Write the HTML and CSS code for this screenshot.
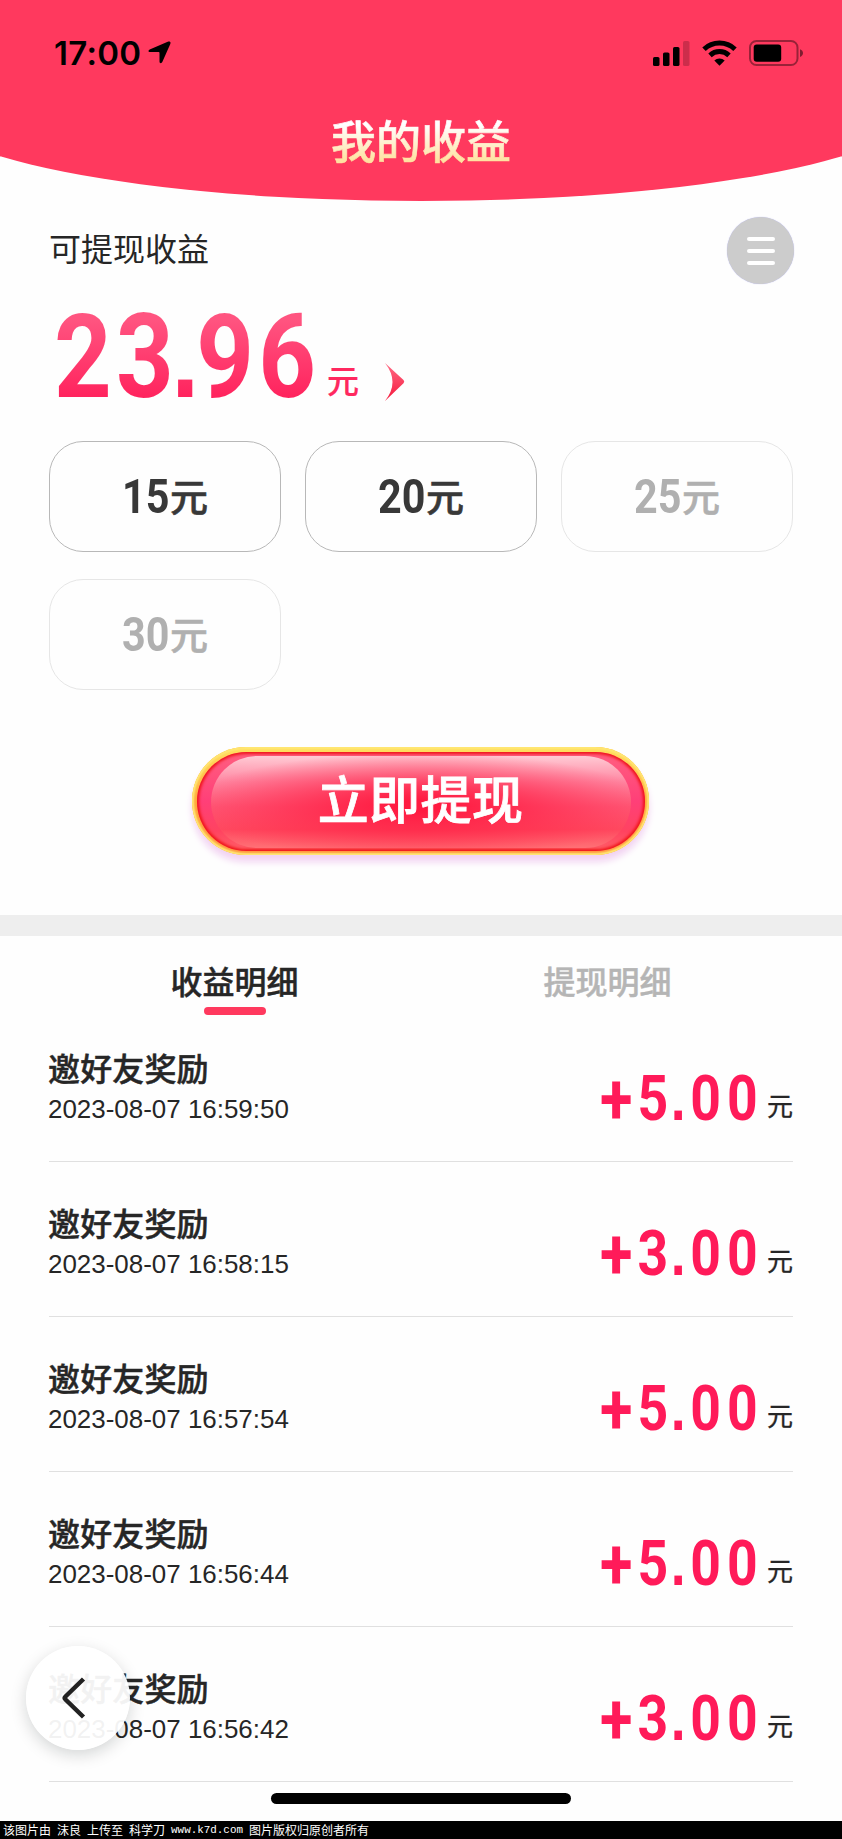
FILE: index.html
```html
<!DOCTYPE html>
<html lang="zh-CN">
<head>
<meta charset="utf-8">
<title>我的收益</title>
<link rel="stylesheet" href="styles.css">
</head>
<body>
<div class="page">
  <header class="hero">
    <div class="status">
      <div class="status-left">
        <span class="clock">17:00</span>
        <svg class="loc" width="23" height="23" viewBox="0 0 23 23"><path d="M20.3.5 1.7 8.5C-.2 9.4.3 11 2 11.100h8.700q.8 0 .8.8v8.600c0 1.900 2 2.300 2.800.5L22.300 2.900C23 1.200 22 0 20.300.5Z"/></svg>
      </div>
      <div class="status-right">
        <svg width="37" height="25" viewBox="0 0 37 25"><rect x="0" y="16" width="6.500" height="9" rx="1.600"/><rect x="10" y="11.500" width="6.500" height="13.500" rx="1.600"/><rect x="20" y="6" width="6.500" height="19" rx="1.600"/><rect x="30" y="0" width="6.500" height="25" rx="1.600" opacity=".2"/></svg>
        <svg class="wifi" width="35" height="26" viewBox="0 0 35 26"><g fill="none" stroke="#000" stroke-width="5"><path d="M2 9.200a22.500 22.500 0 0 1 31 0"/><path d="M8 15.300a14 14 0 0 1 19 0"/></g><path d="M17.500 25.800 12.300 20.500a7.600 7.600 0 0 1 10.400 0Z"/></svg>
        <svg class="battery" width="55" height="26" viewBox="0 0 55 26"><rect x="1" y="1" width="47.500" height="24" rx="6.500" fill="none" stroke="#000" stroke-width="2" opacity=".4"/><rect x="4.700" y="4.500" width="27.500" height="17.300" rx="3"/><path d="M51 9.300c4 1.500 4 6.100 0 7.600Z" opacity=".5"/></svg>
      </div>
    </div>
    <h1 class="title">我的收益</h1>
  </header>

  <section class="wallet">
    <div class="wallet-head">
      <span class="wallet-label">可提现收益</span>
      <span class="menu"><i></i><i></i><i></i></span>
    </div>
    <div class="balance">
      <span class="balance-num">23<i class="dot">.</i>96</span>
      <span class="balance-unit">元</span>
      <svg class="arrow" width="20" height="38" viewBox="0 0 20 38"><defs><linearGradient id="ag" x1="0" y1="0" x2="0" y2="1"><stop offset="0" stop-color="#ff6b85"/><stop offset="1" stop-color="#f5183c"/></linearGradient></defs><path d="M0 0 18.500 17q1.500 1.600 0 3.200L0 38Q15 19 0 0Z" fill="url(#ag)"/></svg>
    </div>
    <div class="options">
      <div class="option"><b>15</b><span>元</span></div>
      <div class="option"><b>20</b><span>元</span></div>
      <div class="option off"><b>25</b><span>元</span></div>
      <div class="option off"><b>30</b><span>元</span></div>
    </div>
    <div class="cta"><div class="cta-body"><div class="cta-gloss"></div><span>立即提现</span></div></div>
  </section>

  <section class="detail">
    <nav class="tabs">
      <span class="tab active">收益明细</span>
      <span class="tab">提现明细</span>
    </nav>
    <ul class="list">
      <li class="row"><div class="info"><b>邀好友奖励</b><time>2023-08-07 16:59:50</time></div><div class="amount"><strong><i class="plus">+</i>5<i class="dot">.</i>00</strong><span>元</span></div></li>
      <li class="row"><div class="info"><b>邀好友奖励</b><time>2023-08-07 16:58:15</time></div><div class="amount"><strong><i class="plus">+</i>3<i class="dot">.</i>00</strong><span>元</span></div></li>
      <li class="row"><div class="info"><b>邀好友奖励</b><time>2023-08-07 16:57:54</time></div><div class="amount"><strong><i class="plus">+</i>5<i class="dot">.</i>00</strong><span>元</span></div></li>
      <li class="row"><div class="info"><b>邀好友奖励</b><time>2023-08-07 16:56:44</time></div><div class="amount"><strong><i class="plus">+</i>5<i class="dot">.</i>00</strong><span>元</span></div></li>
      <li class="row"><div class="info"><b>邀好友奖励</b><time>2023-08-07 16:56:42</time></div><div class="amount"><strong><i class="plus">+</i>3<i class="dot">.</i>00</strong><span>元</span></div></li>
    </ul>
    <div class="home"></div>
  </section>

  <footer class="credit"><span>该图片由</span><span>沫良</span><span>上传至</span><span>科学刀</span><span class="site">www.k7d.com</span><span>图片版权归原创者所有</span></footer>

  <div class="back"><svg width="24" height="42" viewBox="0 0 24 42"><path d="M21.500 2 3.500 19.500q-1.500 1.500 0 3L21.500 40" fill="none" stroke="#222" stroke-width="4.500"/></svg></div>
</div>
</body>
</html>
```
FILE: styles.css
```css
* { box-sizing: border-box; }
body {
  margin: 0;
  font-family: "Liberation Sans", "Noto Sans CJK SC", sans-serif;
  color: #262626;
  background: #fefefe;
}
i { font-style: normal; }
.page {
  position: relative;
  display: flex;
  flex-direction: column;
  width: 842px;
  height: 1839px;
  overflow: hidden;
}

/* header */
.hero {
  position: relative;
  height: 201px;
  overflow: hidden;
}
.hero::before {
  content: "";
  position: absolute;
  top: 0;
  left: -10%;
  width: 120%;
  height: 100%;
  background: #ff395e;
  border-radius: 0 0 50% 50% / 0 0 100px 100px;
}
.status {
  position: relative;
  display: flex;
  justify-content: space-between;
  height: 110px;
  padding: 40px 38px 0 54px;
}
.status-left, .status-right { display: flex; align-items: flex-start; }
.clock {
  font: 600 33px/27px Inter, sans-serif;
  letter-spacing: .3px;
  width: 94px;
  color: #000;
}
.loc { margin-top: 1px; }
.status-right { padding-top: 1px; }
.wifi { margin: -1px 12px 0 12px; }
.battery { margin-top: -1px; }
.title {
  position: relative;
  width: max-content;
  margin: 0 auto;
  font: 500 45px/60px "Noto Sans CJK SC", sans-serif;
  background: linear-gradient(#fff 25%, #ffe2a0 85%);
  -webkit-background-clip: text;
  background-clip: text;
  color: transparent;
  -webkit-text-stroke: .7px transparent;
}

/* wallet */
.wallet {
  height: 714px;
  padding: 15px 49px 0;
}
.wallet-head {
  display: flex;
  justify-content: space-between;
  align-items: center;
  height: 68px;
}
.wallet-label { font: 400 32px/40px "Noto Sans CJK SC", sans-serif; padding-bottom: 6px; }
.menu {
  display: flex;
  flex-direction: column;
  align-items: center;
  justify-content: center;
  gap: 8px;
  width: 67px;
  height: 67px;
  margin: 1px -1px 0 0;
  border-radius: 50%;
  background: #ccc;
  box-shadow: 0 0 1px #aaaaf0;
}
.menu i { width: 28px; height: 4px; border-radius: 2px; background: #fff; }
.balance { display: flex; height: 157px; }
.balance-num {
  width: 325px;
  height: 142px;
  margin: 0 -46px 0 5px;
  padding-top: 14px;
  font: 700 117px/118px Roboto, sans-serif;
  letter-spacing: 5px;
  transform: scaleX(.86);
  transform-origin: 0 0;
  white-space: nowrap;
  background: linear-gradient(#ff5480 25%, #ff215c 82%);
  -webkit-background-clip: text;
  background-clip: text;
  color: transparent;
}
.dot {
  display: inline-block;
  font-family: "Liberation Sans", sans-serif;
  line-height: 1;
}
.balance-num .dot { width: 21px; text-indent: -8px; letter-spacing: 0; }
.balance-unit {
  margin: 75px 0 0 -6px;
  font: 500 32px/40px "Noto Sans CJK SC", sans-serif;
  color: #ff285f;
  -webkit-text-stroke: .2px;
}
.arrow { margin: 79px 0 0 26px; }
.options {
  display: grid;
  grid-template-columns: repeat(3, 232px);
  grid-auto-rows: 111px;
  gap: 27px 24px;
}
.option {
  display: flex;
  align-items: center;
  justify-content: center;
  border: 1px solid #b8b8b8;
  border-radius: 34px;
  color: #383838;
}
.option b {
  width: 48px;
  padding-top: 1px;
  font: 700 48px/56px Roboto, sans-serif;
  transform: scaleX(.86);
  transform-origin: 0 0;
}
.option span { font: 500 38px/50px "Noto Sans CJK SC", sans-serif; -webkit-text-stroke: .6px; padding-bottom: 4px; }
.option.off { border-color: #e6e6e6; color: #b0b0b0; }

.cta {
  width: 457px;
  height: 108px;
  margin: 57px auto 0 143px;
  padding: 4.5px;
  border-radius: 55px;
  background: linear-gradient(#ffe060, #ffa83c 50%, #ff9640);
  box-shadow: inset 0 0 2px 2px #ffe874, inset 0 0 0 1px #ffc050, 0 7px 7px #f2d3f2;
}
.cta-body {
  display: flex;
  align-items: center;
  justify-content: center;
  position: relative;
  height: 99px;
  border-radius: 50px;
  background: linear-gradient(#ff5f80, #ff3f78 50%, #ff4360 80%, #ff6068);
  box-shadow: inset 0 0 3px 2px #f01418;
}
.cta-gloss {
  position: absolute;
  inset: 4px 14px 3px;
  border-radius: 46px;
  background:
    radial-gradient(ellipse 56% 58% at 50% 54%, #ff1b41 10%, rgba(255, 27, 65, 0)),
    linear-gradient(#ffcad4, #ff87a2 28%, #ff5a78 55%, #ff4a60 80%, #ff7075);
}
.cta span {
  position: relative;
  font: 500 51px/70px "Noto Sans CJK SC", sans-serif;
  letter-spacing: .4px;
  color: #fff;
  -webkit-text-stroke: .8px;
  padding-bottom: 8px;
}

/* detail */
.detail {
  height: 906px;
  border-top: 21px solid #eee;
}
.tabs {
  display: grid;
  grid-template-columns: 373px 373px;
  padding-left: 48px;
  height: 89px;
}
.tab {
  display: flex;
  flex-direction: column;
  align-items: center;
  padding-top: 20px;
  font: 500 32px/48px "Noto Sans CJK SC", sans-serif;
  -webkit-text-stroke: .45px;
  color: #b5b5b5;
}
.tab.active { color: #262626; }
.tab.active::after {
  content: "";
  width: 62px;
  height: 8px;
  margin-top: 3px;
  border-radius: 4px;
  background: #ff395e;
}
.list { list-style: none; margin: 0; padding: 0 49px; }
.row {
  display: flex;
  justify-content: space-between;
  height: 155px;
  border-bottom: 1px solid #e0e0e0;
}
.row:first-child { height: 137px; }
.row + .row { padding-top: 18px; }
.info { display: flex; flex-direction: column; margin-left: -1px; padding-top: 18px; }
.info b { font: 500 32px/48px "Noto Sans CJK SC", sans-serif; -webkit-text-stroke: .45px; letter-spacing: .15px; }
.info time { font-size: 25.950px; line-height: 30px; margin-top: 3px; }
.amount { display: flex; }
.amount strong {
  width: 167px;
  padding-top: 36px;
  font: 700 63px/75px Roboto, sans-serif;
  letter-spacing: 7px;
  white-space: nowrap;
  color: #ff1a59;
  transform: scaleX(.85);
  transform-origin: 0 0;
}
.plus { display: inline-block; width: 44px; font-size: 70px; line-height: 0; vertical-align: -3px; letter-spacing: 0; }
.amount .dot { width: 19px; text-indent: -4px; letter-spacing: 0; }
.amount span { padding-top: 63px; font: 400 26px/36px "Noto Sans CJK SC", sans-serif; padding-top: 62px; -webkit-text-stroke: .3px; }
.home {
  width: 300px;
  height: 11px;
  margin: 11px auto 0;
  border-radius: 6px;
  background: #000;
}

.credit {
  display: flex;
  gap: 6px;
  height: 18px;
  padding-left: 3px;
  background: #000;
  color: #fff;
  font: 400 12px/17px "Noto Sans CJK SC", sans-serif;
  white-space: nowrap;
}
.site { font-family: "Liberation Mono", monospace; font-size: 10.900px; width: 72px; line-height: 19px; }

.back {
  position: absolute;
  left: 26px;
  top: 1646px;
  display: flex;
  align-items: center;
  width: 104px;
  height: 104px;
  padding-left: 36px;
  border-radius: 50%;
  background: rgba(255, 255, 255, .94);
  box-shadow: 0 5px 16px rgba(0, 20, 20, .17);
}
```
